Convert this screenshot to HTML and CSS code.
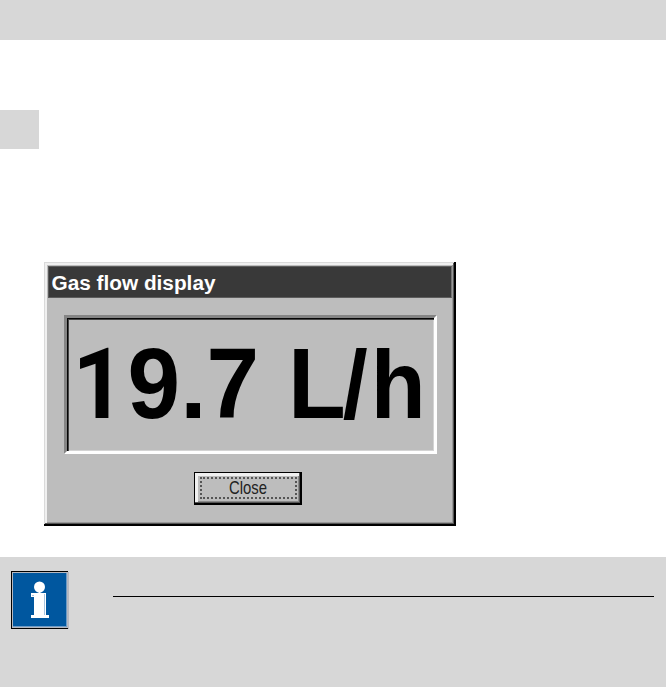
FILE: index.html
```
<!DOCTYPE html>
<html lang="en">
<head>
<meta charset="utf-8">
<title>Gas flow display</title>
<link rel="stylesheet" href="styles.css">
</head>
<body>
<header class="page-header"></header>
<div class="margin-mark"></div>
<section class="window">
  <div class="title-bar">
    <svg class="title" width="402" height="30"><text x="2.5" y="22.5" textLength="164" lengthAdjust="spacingAndGlyphs">Gas flow display</text></svg>
  </div>
  <div class="readout">
    <svg class="value" width="367" height="133"><text y="100" transform="scale(.936 1)" x="5.8 64.6 121 149 206 236 294.5 324.5"><tspan class="one">1</tspan>9.7 L<tspan class="unit">/h</tspan></text></svg>
  </div>
  <button class="close">
    <span class="focus">
      <svg class="label" width="98" height="22"><text x="29" y="17" textLength="38" lengthAdjust="spacingAndGlyphs">Close</text></svg>
    </span>
  </button>
</section>
<aside class="note">
  <svg class="info" width="58" height="58" viewBox="0 0 58 58">
    <path fill="#000" d="M0 0h57v1H1v56h56v1H0z"/>
    <path fill="#b5b8c0" d="M1 1h56v56H1zM57 1h1v57h-1z"/>
    <path fill="#6d9bc5" d="M2 2h54v54H2z"/>
    <path fill="#00579f" d="M2 2h53v53H2z"/>
    <circle cx="28.5" cy="16" r="5.5" fill="#fff"/>
    <path fill="#fff" d="M27.5 20h2v2h5.5v22h3v3H20v-3h3V26h-3v-4h7.5z"/>
    <path fill="#a9c4de" d="M33 23h1v21h-1zM21 24h2v1h-2z"/>
  </svg>
  <div class="rule"></div>
</aside>
</body>
</html>
```
FILE: styles.css
```
* { box-sizing: border-box; }
body {
  margin: 0;
  height: 687px;
  overflow: hidden;
  display: flex;
  flex-direction: column;
  align-items: flex-start;
  background: #fff;
  font-family: "Liberation Sans", sans-serif;
}
svg { display: block; flex: none; }
.page-header { width: 100%; height: 40px; background: #d7d7d7; }
.margin-mark { width: 39px; height: 39px; margin-top: 70px; background: #d7d7d7; }
.window {
  width: 412px;
  height: 264px;
  margin: 113px 0 0 44px;
  padding: 4px;
  display: flex;
  flex-direction: column;
  align-items: center;
  background: #bdbdbd;
  box-shadow:
    inset -2px -2px #000,
    inset 1px 1px #dadada,
    inset -3px -3px #555,
    inset 3px 3px #f0f0f0,
    inset -4px -4px #999;
}
.title-bar {
  width: 404px;
  height: 32px;
  background: #393939;
  border: 1px solid #5c5c5c;
  border-right-color: #777;
}
.title { fill: #fff; font-size: 20px; font-weight: bold; }
.readout {
  width: 373px;
  height: 139px;
  margin: 17px 0 0 1px;
  border: solid;
  border-width: 3px;
  border-color: #858585 #fff #fff #858585;
  box-shadow: inset 1px 1px #050505, inset 2px 2px #444, inset -1px -1px #d4d4d4;
}
.value { fill: #000; font-size: 101px; font-weight: bold; }
.one { font-family: Roboto, sans-serif; font-size: 98px; }
.unit { font-size: 96px; }
.close {
  width: 108px;
  height: 33px;
  margin: 18px 4px 0 0;
  padding: 0;
  font: inherit;
  background: #bdbdbd;
  border: solid #000;
  border-width: 1px 2px 2px 1px;
  box-shadow: inset -1px -1px #555, inset 3px 3px #f0f0f0, inset -2px -2px #8a8a8a;
}
.focus {
  display: block;
  width: 97px;
  height: 22px;
  margin: 0 0 0 5px;
  border: 2px dotted #555;
}
.label { margin: -2px; fill: #222; font-size: 19px; }
.note {
  width: 100%;
  height: 130px;
  flex: none;
  margin-top: 31px;
  padding: 14px 11px;
  display: flex;
  background: #d7d7d7;
}
.rule { width: 541px; height: 1px; margin: 25px 0 0 44px; background: #000; }
```
